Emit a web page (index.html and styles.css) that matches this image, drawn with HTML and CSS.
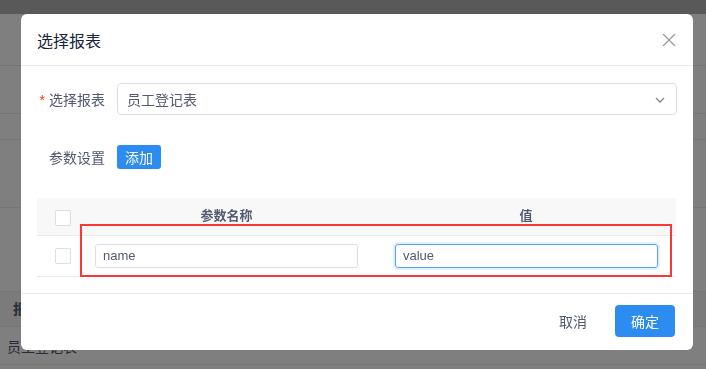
FILE: index.html
```html
<!DOCTYPE html>
<html lang="zh">
<head>
<meta charset="utf-8">
<title>选择报表</title>
<link rel="stylesheet" href="styles.css">
</head>
<body>
<div class="page">
  <div class="topbar"></div>
  <div class="bg-row h52"></div>
  <div class="bg-row h48"></div>
  <div class="bg-row h26"></div>
  <div class="bg-row h68"></div>
  <div class="bg-row h84"></div>
  <div class="bg-row bg-head">报表名称</div>
  <div class="bg-row bg-cell">员工登记表</div>
</div>
<div class="mask"></div>
<div class="modal">
  <div class="modal-header">
    <span class="modal-title">选择报表</span>
    <svg class="close" width="14" height="14" viewBox="0 0 14 14"><path d="M1 1L13 13M13 1L1 13" stroke="#999" stroke-width="1.2" fill="none"/></svg>
  </div>
  <div class="modal-body">
    <div class="form-item">
      <label class="form-label"><span class="req">*</span>选择报表</label>
      <div class="select">
        <span>员工登记表</span>
        <svg class="arrow" width="10" height="6" viewBox="0 0 10 6"><path d="M1 1L5 5L9 1" stroke="#808695" stroke-width="1.3" fill="none"/></svg>
      </div>
    </div>
    <div class="form-item item2">
      <label class="form-label">参数设置</label>
      <button class="btn-add">添加</button>
    </div>
    <div class="table-wrap">
      <table class="tbl">
        <colgroup><col class="c1"><col class="c2"><col class="c3"></colgroup>
        <thead>
          <tr><th class="chk-cell"><span class="chk"></span></th><th>参数名称</th><th>值</th></tr>
        </thead>
        <tbody>
          <tr>
            <td class="chk-cell"><span class="chk"></span></td>
            <td class="name-cell"><div class="inp">name</div></td>
            <td class="val-cell"><div class="inp focus">value</div></td>
          </tr>
        </tbody>
      </table>
      <div class="highlight"></div>
    </div>
  </div>
  <div class="modal-footer">
    <button class="btn-text">取消</button>
    <button class="btn-primary">确定</button>
  </div>
</div>
</body>
</html>
```
FILE: styles.css
```css
* { box-sizing: border-box; }
html, body { margin: 0; padding: 0; }
body {
  width: 706px; height: 369px; overflow: hidden;
  font-family: "Liberation Sans", "Noto Sans CJK SC", sans-serif;
  background: #fff;
}
.page { width: 706px; }
.topbar { height: 14px; background: #b3b3b3; }
.bg-row { border-bottom: 1px solid #ebebeb; }
.h52 { height: 52px; }
.h48 { height: 48px; }
.h26 { height: 26px; }
.h68 { height: 68px; }
.h84 { height: 84px; }
.bg-head { height: 35px; background: #f6f6f6; font-weight: bold; font-size: 14px; color: #515a6e; line-height: 35px; padding-left: 13px; }
.bg-cell { height: 38px; font-size: 14px; color: #515a6e; line-height: 40px; padding-left: 7px; }
.mask { position: fixed; left: 0; top: 0; width: 706px; height: 369px; background: rgba(0,0,0,.5); }
.modal {
  position: fixed; left: 21px; top: 14px; width: 672px; height: 336px;
  background: #fff; border-radius: 6px;
  display: flex; flex-direction: column;
}
.modal-header {
  height: 52px; border-bottom: 1px solid #e8eaec;
  display: flex; align-items: center; justify-content: space-between;
  padding: 0 16px 0 16px;
}
.modal-title { font-size: 16px; color: #17233d; }
.close { margin-right: 1px; margin-top: 1px; }
.modal-body { padding: 17px 16px 16px 16px; flex: 1; }
.form-item { display: flex; align-items: center; }
.form-label { width: 80px; text-align: right; padding-right: 12px; font-size: 14px; color: #515a6e; }
.req { color: #ed4014; margin-right: 4px; font-family: "Liberation Sans", sans-serif; }
.select {
  flex: 1; height: 32px; border: 1px solid #dcdee2; border-radius: 4px;
  display: flex; align-items: center; justify-content: space-between;
  padding: 0 11px 0 9px; font-size: 14px; color: #515a6e;
}
.arrow { margin-top: 1px; }
.item2 { margin-top: 30px; }
.btn-add {
  height: 24px; width: 44px; padding: 0; border: 0; border-radius: 3px;
  background: #2d8cf0; color: #fff; font-size: 14px;
  font-family: inherit;
}
.table-wrap { position: relative; margin-top: 29px; }
.tbl { width: 639px; border-collapse: collapse; table-layout: fixed; font-size: 13px; }
.c1 { width: 40px; }
.c2 { width: 299px; }
.c3 { width: 300px; }
.tbl th {
  height: 37px; background: #f8f8f9; border-bottom: 1px solid #e8eaec;
  color: #515a6e; font-weight: bold; font-size: 13px; padding: 0; padding-bottom: 4px;
}
.tbl td { height: 41px; border-bottom: 1px solid #e8eaec; padding: 0; }
.tbl .chk-cell { text-align: left; padding-left: 18px; padding-bottom: 0; }
.chk { display: block; width: 16px; height: 16px; border: 1px solid #dcdee2; border-radius: 2px; background: #fff; }
.tbl th.chk-cell .chk { margin-top: 3px; }
.name-cell { padding: 0 18px 0 18px !important; }
.val-cell { padding: 0 18px 0 19px !important; }
.inp {
  height: 24px; border: 1px solid #dcdee2; border-radius: 3px;
  padding: 0 7px; font-size: 13px; line-height: 22px; color: #515a6e;
}
.inp.focus { border-color: #57a3f3; box-shadow: 0 0 0 2px rgba(45,140,240,.15); }
.highlight {
  position: absolute; left: 43px; top: 26px; width: 592px; height: 53px;
  border: 2px solid #fb3636;
}
.modal-footer {
  height: 57px; border-top: 1px solid #e8eaec;
  display: flex; align-items: center; justify-content: flex-end;
  padding: 0 18px 2px 0;
}
.btn-text {
  background: none; border: 0; font-size: 14px; color: #515a6e; padding: 0; margin-right: 28px;
  font-family: inherit;
}
.btn-primary {
  width: 60px; height: 32px; border: 0; border-radius: 4px;
  background: #2d8cf0; color: #fff; font-size: 14px; font-family: inherit;
}
```
